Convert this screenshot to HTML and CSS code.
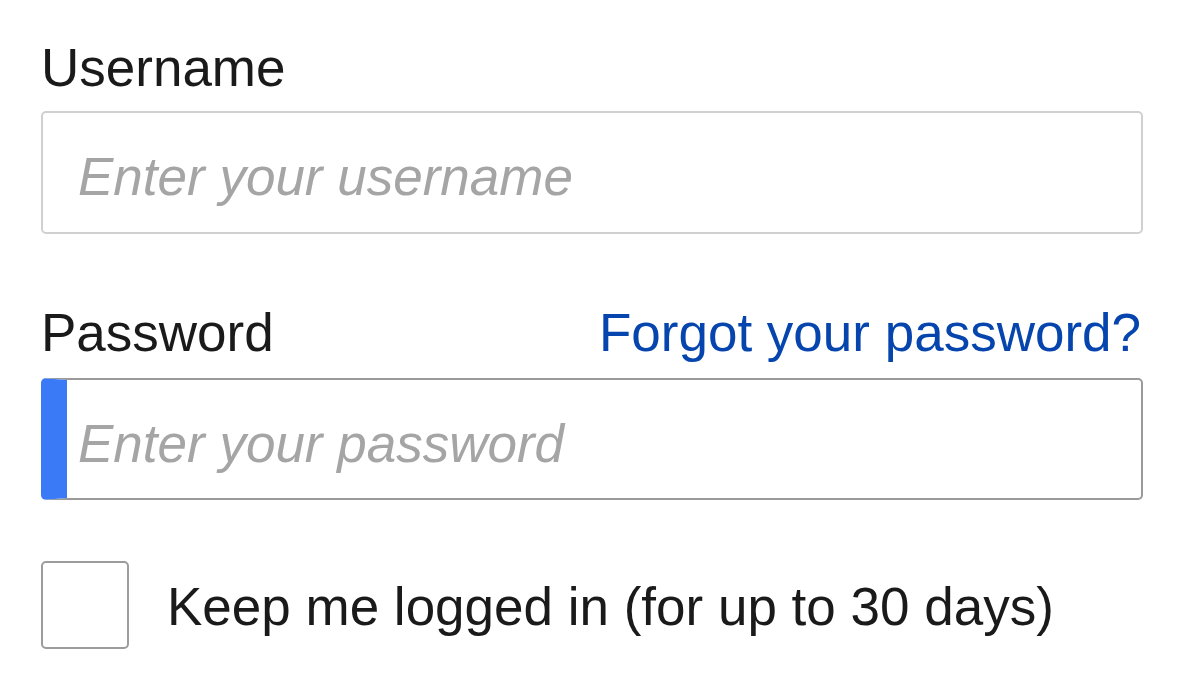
FILE: index.html
```html
<!DOCTYPE html>
<html lang="en">
<head>
<meta charset="utf-8">
<title>Log in</title>
<link rel="stylesheet" href="styles.css">
</head>
<body>
<form class="login">
  <div class="field">
    <label class="label" for="user">Username</label>
    <input class="input" id="user" type="text" placeholder="Enter your username">
  </div>
  <div class="field field-pass">
    <div class="label-row">
      <label class="label" for="pass">Password</label>
      <a class="link" href="#">Forgot your password?</a>
    </div>
    <input class="input input-focus" id="pass" type="password" placeholder="Enter your password">
  </div>
  <div class="check-row">
    <span class="checkbox"></span>
    <span class="check-label">Keep me logged in (for up to 30 days)</span>
  </div>
</form>
</body>
</html>
```

FILE: styles.css
```css
* { box-sizing: border-box; }
html, body {
  margin: 0;
  padding: 0;
  background: #fff;
}
body {
  font-family: "Liberation Sans", Arial, sans-serif;
  font-size: 53px;
  line-height: 60px;
  color: #1a1a1a;
}
.login {
  width: 1143px;
  padding: 38px 0 0 41px;
}
.field {
  display: flex;
  flex-direction: column;
}
.label {
  display: block;
  height: 60px;
  color: #1a1a1a;
}
.input {
  display: block;
  width: 1102px;
  height: 123px;
  margin: 13px 0 0;
  padding: 8px 33px 0 35px;
  border: 2px solid #d0d0d0;
  border-radius: 5px;
  font-family: "Liberation Sans", Arial, sans-serif;
  font-size: 53px;
  color: #1a1a1a;
  background: #fff;
  outline: none;
}
.input::placeholder {
  color: #a5a5a5;
  font-style: italic;
}
.field-pass {
  margin-top: 69px;
}
.label-row {
  display: flex;
  justify-content: space-between;
  align-items: baseline;
  width: 1102px;
}
.link {
  color: #0645ad;
  text-decoration: none;
  margin-right: 2px;
}
.input-focus {
  margin-top: 15px;
  height: 122px;
  border-color: #9a9a9a;
  border-left: 26px solid #3a7af6;
  padding-left: 11px;
}
.check-row {
  display: flex;
  align-items: flex-start;
  margin-top: 61px;
}
.checkbox {
  width: 88px;
  height: 88px;
  border: 2px solid #9c9c9c;
  border-radius: 5px;
  background: #fff;
  flex: none;
}
.check-label {
  margin-left: 38px;
  padding-top: 16px;
}
```
